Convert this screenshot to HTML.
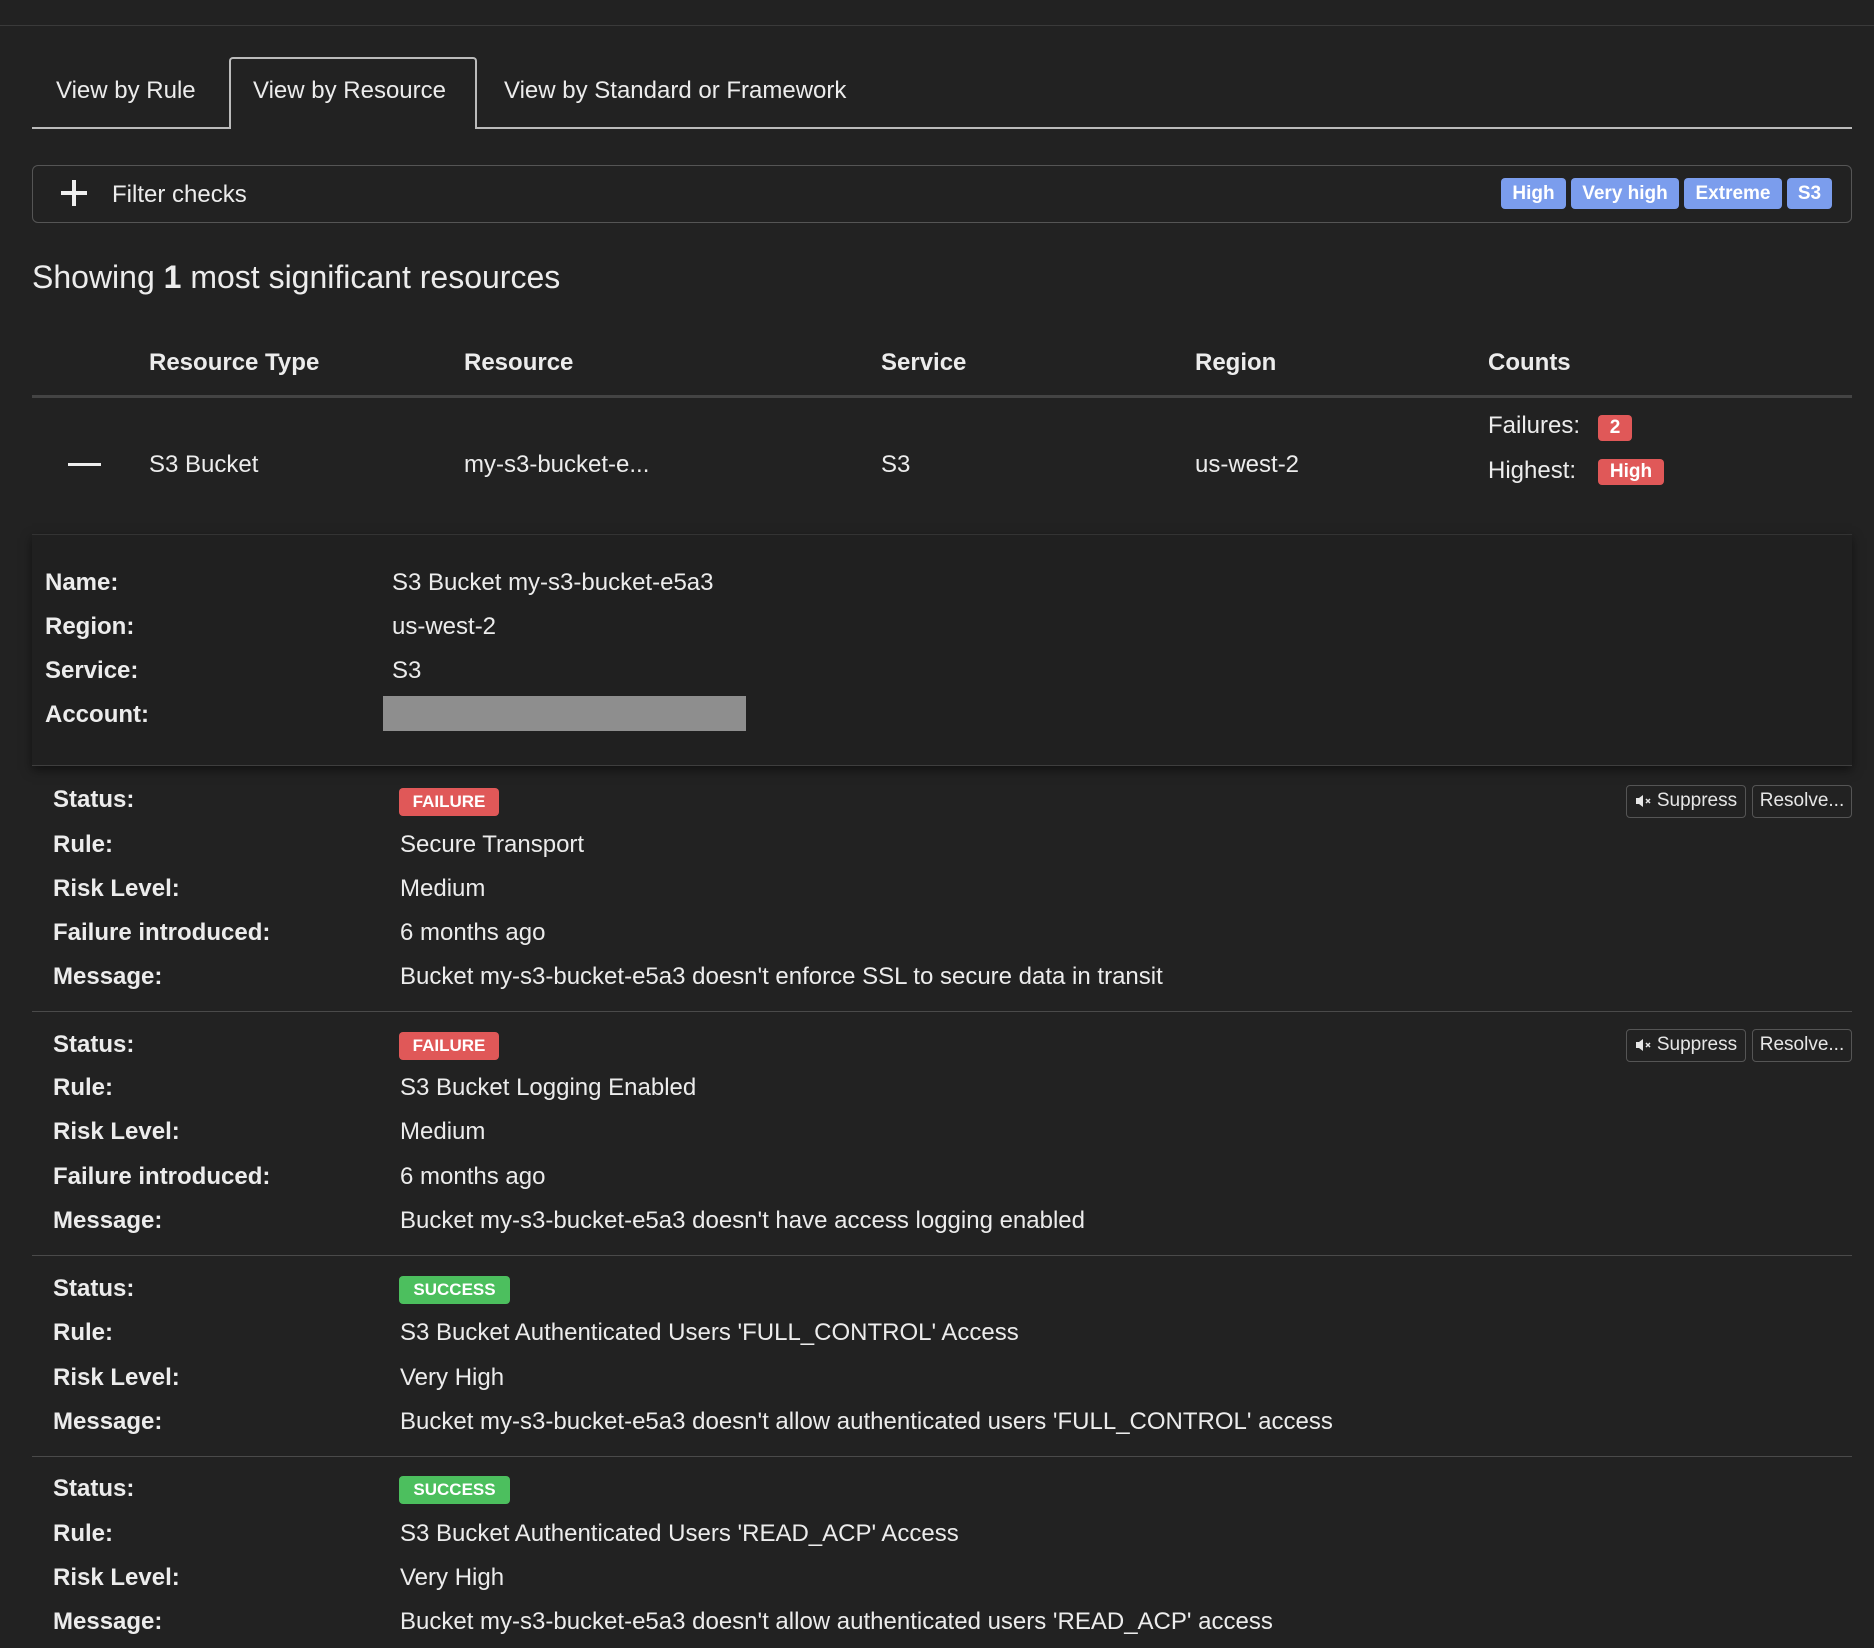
<!DOCTYPE html>
<html><head><meta charset="utf-8"><style>
*{margin:0;padding:0;box-sizing:border-box}
body{width:1874px;height:1648px;background:#222;color:#ececec;font-family:"Liberation Sans",sans-serif;position:relative;overflow:hidden}
.a{position:absolute;white-space:nowrap;line-height:32px;font-size:24px}
.b{font-weight:bold}
.hl{position:absolute;height:1px;background:#4a4a4a}
.bd{position:absolute;border-radius:4px;font-weight:bold;color:#fff;text-align:center}
.blue{background:#7b9ded;font-size:19px;line-height:31px;height:31px}
.red{background:#e05858}
.green{background:#4cbf5e}
.st{font-size:17px;line-height:28px;height:28px}
.btn{position:absolute;border:1px solid #555;border-radius:4px;font-size:19px;line-height:30px;height:33px;text-align:center;color:#e6e6e6}
.btn svg{vertical-align:-2px;margin-right:4px}
</style></head><body>
<div class="hl" style="left:0;top:25px;width:1874px;background:#3a3a3a"></div>
<div class="hl" style="left:32px;top:127px;width:1820px;height:2px;background:#bbb"></div>
<div style="position:absolute;left:229px;top:57px;width:248px;height:72px;border:2px solid #bbb;border-bottom:none;border-radius:4px 4px 0 0;background:#222"></div>
<div class="a" style="left:56px;top:75px">View by Rule</div>
<div class="a" style="left:253px;top:75px">View by Resource</div>
<div class="a" style="left:504px;top:75px">View by Standard or Framework</div>
<div style="position:absolute;left:32px;top:165px;width:1820px;height:58px;border:1px solid #555;border-radius:6px"></div>
<div style="position:absolute;left:61px;top:191px;width:26px;height:4px;background:#eee"></div>
<div style="position:absolute;left:72px;top:180px;width:4px;height:26px;background:#eee"></div>
<div class="a" style="left:112px;top:179px">Filter checks</div>
<div class="bd blue" style="left:1501px;top:178px;width:65px">High</div>
<div class="bd blue" style="left:1571px;top:178px;width:108px">Very high</div>
<div class="bd blue" style="left:1684px;top:178px;width:98px">Extreme</div>
<div class="bd blue" style="left:1787px;top:178px;width:45px">S3</div>
<div class="a" style="left:32px;top:257px;font-size:32px;line-height:40px">Showing <b>1</b> most significant resources</div>
<div class="a b" style="left:149px;top:347px">Resource Type</div>
<div class="a b" style="left:464px;top:347px">Resource</div>
<div class="a b" style="left:881px;top:347px">Service</div>
<div class="a b" style="left:1195px;top:347px">Region</div>
<div class="a b" style="left:1488px;top:347px">Counts</div>
<div class="hl" style="left:32px;top:395px;width:1820px;height:3px;background:#444"></div>
<div style="position:absolute;left:68px;top:463px;width:33px;height:3px;background:#eee"></div>
<div class="a" style="left:149px;top:449px">S3 Bucket</div>
<div class="a" style="left:464px;top:449px">my-s3-bucket-e...</div>
<div class="a" style="left:881px;top:449px">S3</div>
<div class="a" style="left:1195px;top:449px">us-west-2</div>
<div class="a" style="left:1488px;top:410px">Failures:</div>
<div class="bd red" style="left:1598px;top:415px;width:34px;height:26px;font-size:19px;line-height:26px">2</div>
<div class="a" style="left:1488px;top:455px">Highest:</div>
<div class="bd red" style="left:1598px;top:459px;width:66px;height:26px;font-size:19px;line-height:26px">High</div>
<div style="position:absolute;left:32px;top:534px;width:1820px;height:232px;background:#202020;border-top:1px solid #333;border-bottom:1px solid #3e3e3e;box-shadow:0 4px 10px rgba(0,0,0,.5)"></div>
<div class="a b" style="left:45px;top:567px">Name:</div><div class="a" style="left:392px;top:567px">S3 Bucket my-s3-bucket-e5a3</div>
<div class="a b" style="left:45px;top:611px">Region:</div><div class="a" style="left:392px;top:611px">us-west-2</div>
<div class="a b" style="left:45px;top:655px">Service:</div><div class="a" style="left:392px;top:655px">S3</div>
<div class="a b" style="left:45px;top:699px">Account:</div>
<div style="position:absolute;left:383px;top:696px;width:363px;height:35px;background:#8e8e8e"></div>

<div class="a b" style="left:53px;top:784px">Status:</div><div class="bd red st" style="left:399px;top:788px;width:100px">FAILURE</div>
<div class="btn" style="left:1626px;top:785px;width:120px"><svg width="18" height="14" viewBox="0 0 18 14"><path d="M1 4h3l4-3v12l-4-3H1z" fill="#e6e6e6"/><path d="M11 5l4 4M15 5l-4 4" stroke="#e6e6e6" stroke-width="1.5"/></svg>Suppress</div>
<div class="btn" style="left:1752px;top:785px;width:100px">Resolve...</div>
<div class="a b" style="left:53px;top:829px">Rule:</div><div class="a" style="left:400px;top:829px">Secure Transport</div>
<div class="a b" style="left:53px;top:873px">Risk Level:</div><div class="a" style="left:400px;top:873px">Medium</div>
<div class="a b" style="left:53px;top:917px">Failure introduced:</div><div class="a" style="left:400px;top:917px">6 months ago</div>
<div class="a b" style="left:53px;top:961px">Message:</div><div class="a" style="left:400px;top:961px">Bucket my-s3-bucket-e5a3 doesn't enforce SSL to secure data in transit</div>
<div class="hl" style="left:32px;top:1011px;width:1820px"></div>

<div class="a b" style="left:53px;top:1029px">Status:</div><div class="bd red st" style="left:399px;top:1032px;width:100px">FAILURE</div>
<div class="btn" style="left:1626px;top:1029px;width:120px"><svg width="18" height="14" viewBox="0 0 18 14"><path d="M1 4h3l4-3v12l-4-3H1z" fill="#e6e6e6"/><path d="M11 5l4 4M15 5l-4 4" stroke="#e6e6e6" stroke-width="1.5"/></svg>Suppress</div>
<div class="btn" style="left:1752px;top:1029px;width:100px">Resolve...</div>
<div class="a b" style="left:53px;top:1072px">Rule:</div><div class="a" style="left:400px;top:1072px">S3 Bucket Logging Enabled</div>
<div class="a b" style="left:53px;top:1116px">Risk Level:</div><div class="a" style="left:400px;top:1116px">Medium</div>
<div class="a b" style="left:53px;top:1161px">Failure introduced:</div><div class="a" style="left:400px;top:1161px">6 months ago</div>
<div class="a b" style="left:53px;top:1205px">Message:</div><div class="a" style="left:400px;top:1205px">Bucket my-s3-bucket-e5a3 doesn't have access logging enabled</div>
<div class="hl" style="left:32px;top:1255px;width:1820px"></div>

<div class="a b" style="left:53px;top:1273px">Status:</div><div class="bd green st" style="left:399px;top:1276px;width:111px">SUCCESS</div>
<div class="a b" style="left:53px;top:1317px">Rule:</div><div class="a" style="left:400px;top:1317px">S3 Bucket Authenticated Users 'FULL_CONTROL' Access</div>
<div class="a b" style="left:53px;top:1362px">Risk Level:</div><div class="a" style="left:400px;top:1362px">Very High</div>
<div class="a b" style="left:53px;top:1406px">Message:</div><div class="a" style="left:400px;top:1406px">Bucket my-s3-bucket-e5a3 doesn't allow authenticated users 'FULL_CONTROL' access</div>
<div class="hl" style="left:32px;top:1456px;width:1820px"></div>

<div class="a b" style="left:53px;top:1473px">Status:</div><div class="bd green st" style="left:399px;top:1476px;width:111px">SUCCESS</div>
<div class="a b" style="left:53px;top:1518px">Rule:</div><div class="a" style="left:400px;top:1518px">S3 Bucket Authenticated Users 'READ_ACP' Access</div>
<div class="a b" style="left:53px;top:1562px">Risk Level:</div><div class="a" style="left:400px;top:1562px">Very High</div>
<div class="a b" style="left:53px;top:1606px">Message:</div><div class="a" style="left:400px;top:1606px">Bucket my-s3-bucket-e5a3 doesn't allow authenticated users 'READ_ACP' access</div>
</body></html>
